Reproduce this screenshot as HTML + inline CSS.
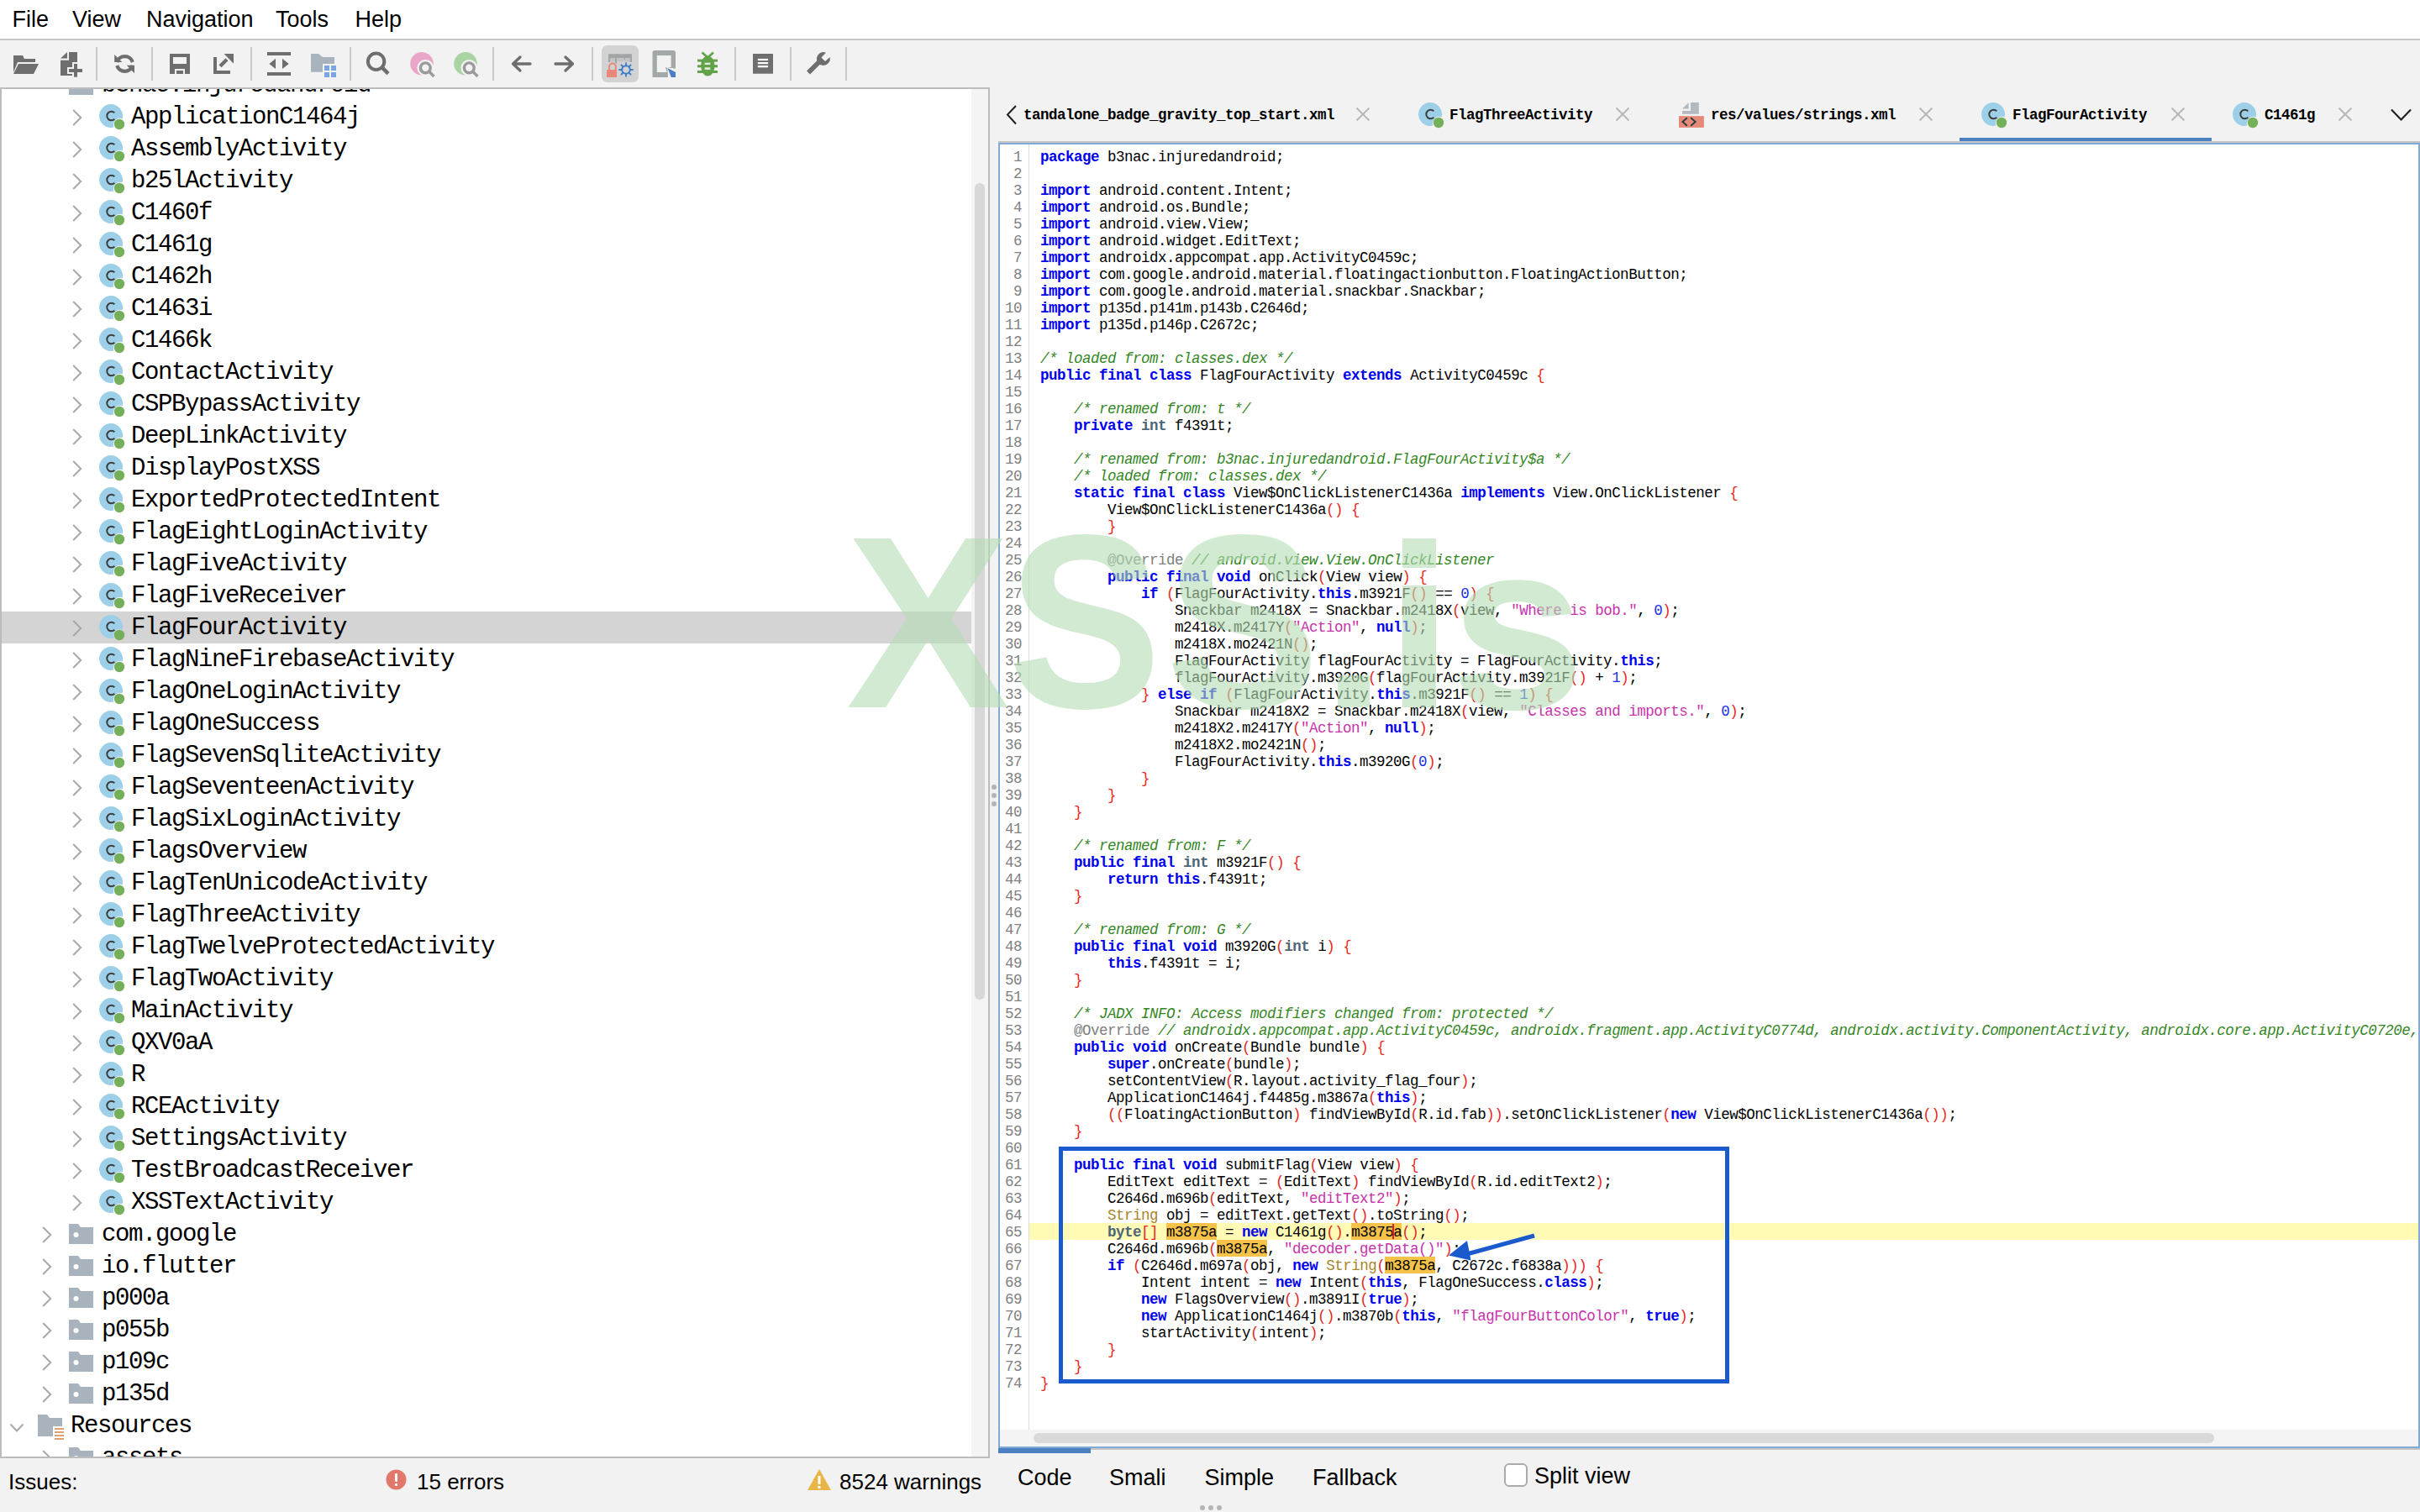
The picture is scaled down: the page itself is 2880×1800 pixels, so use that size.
<!DOCTYPE html>
<html><head><meta charset="utf-8">
<style>
*{margin:0;padding:0;box-sizing:border-box}
html,body{width:2880px;height:1800px;overflow:hidden;background:#f2f2f2;font-family:"Liberation Sans",sans-serif;color:#000}
.abs{position:absolute}
#menubar{position:absolute;left:0;top:0;width:2880px;height:46px;background:#fff;border-bottom:2px solid #c6c6c6;height:48px}
.menu{position:absolute;top:5px;font-size:27px;line-height:36px}
#toolbar{position:absolute;left:0;top:48px;width:2880px;height:56px;background:#f2f2f2}
.sep{position:absolute;top:56px;width:2px;height:40px;background:#c9c9c9}
#tree{position:absolute;left:0;top:104px;width:1178px;height:1632px;background:#fff;border:2px solid #bcbcbc;overflow:hidden}
#treein{position:absolute;left:-2px;top:-106px;width:1178px;height:1800px}
.tr{position:absolute;left:0;width:1156px;height:38px}
.sel{position:absolute;left:0;width:1156px;height:38px;background:#d4d4d4}
.tt{position:absolute;top:1px;font-family:"Liberation Mono",monospace;font-size:29px;letter-spacing:-1.4px;line-height:38px;white-space:pre}
#vscroll{position:absolute;left:1154px;top:0;width:20px;height:1628px;background:#f4f4f4}
#vthumb{position:absolute;left:4px;top:112px;width:12px;height:972px;border-radius:6px;background:#d7d7d7}
#status{position:absolute;left:0;top:1736px;width:1178px;height:64px}
.stt{position:absolute;font-size:26px;line-height:36px;top:1746px}
#tabs{position:absolute;left:1188px;top:106px;width:1692px;height:62px}
.tabt{position:absolute;font-family:"Liberation Mono",monospace;font-weight:bold;font-size:17.5px;letter-spacing:-0.5px;line-height:24px;top:125px;white-space:pre}
#tabline{position:absolute;left:1188px;top:168px;width:1692px;height:2px;background:#c4c4c4}
#editor{position:absolute;left:1188px;top:170px;width:1692px;height:1554px;border:2px solid #83a9d5;background:#fff;overflow:hidden}
#edin{position:absolute;left:-1190px;top:-172px;width:2880px;height:1800px}
.cl{position:absolute;left:1238px;height:20px;font-family:"Liberation Mono",monospace;font-size:17.5px;letter-spacing:-0.5px;line-height:20px;white-space:pre}
.ln{position:absolute;left:1170px;width:46px;text-align:right;height:20px;font-family:"Liberation Mono",monospace;font-size:17.5px;letter-spacing:-0.5px;line-height:20px;color:#808080;white-space:pre}
.kw{color:#0000f0;font-weight:bold}
.ty{color:#4e6577;font-weight:bold}
.sy{color:#a8842a}
.cm{color:#35861f;font-style:italic}
.st{color:#c832aa}
.nu{color:#1a30e8}
.br{color:#e6281e}
.an{color:#808080}
#gutline{position:absolute;left:1224px;top:172px;width:1px;height:1530px;background:#dcdcdc}
#hscroll{position:absolute;left:1190px;top:1702px;width:1688px;height:20px;background:#f4f4f4}
#hthumb{position:absolute;left:40px;top:4px;width:1405px;height:12px;border-radius:6px;background:#d9d9d9}
#bottabs{position:absolute;left:1188px;top:1724px;width:1692px;height:76px}
.btt{position:absolute;font-size:27px;line-height:36px;top:1741px}
.dot{position:absolute;width:6px;height:6px;border-radius:3px;background:#b4b4b4}
</style></head><body>
<div id="menubar">
<div class="menu" style="left:14.5px">File</div>
<div class="menu" style="left:86px">View</div>
<div class="menu" style="left:174px">Navigation</div>
<div class="menu" style="left:328px">Tools</div>
<div class="menu" style="left:422.5px">Help</div>
</div>
<div id="toolbar"></div>

<svg class="abs" style="left:0;top:0" width="1100" height="104" viewBox="0 0 1100 104">
<!-- open folder -->
<path d="M16 66 H27 L29 70 H42 V74 H21 L16 86 Z" fill="#6e6e6e"/>
<path d="M22 76 H46 L40 88 H16 Z" fill="#6e6e6e"/>
<!-- new file plus -->
<path d="M72 69.6 L80 62 V69.6 Z" fill="#6e6e6e"/>
<path d="M82 62 H92 V90 H72 V71.8 H82 Z" fill="#6e6e6e"/>
<rect x="86" y="74" width="8" height="19.7" fill="#f2f2f2"/>
<rect x="80" y="80" width="20" height="8" fill="#f2f2f2"/>
<rect x="88" y="76" width="4" height="15.7" fill="#6e6e6e"/>
<rect x="82" y="82" width="16" height="4" fill="#6e6e6e"/>
<!-- refresh -->
<path d="M139.2 74 A9.75 9.75 0 0 1 157.8 74" fill="none" stroke="#6e6e6e" stroke-width="4.2"/>
<path d="M136.2 65 L136.2 74.1 L145.3 74.1 Z" fill="#6e6e6e"/>
<path d="M157.8 78 A9.75 9.75 0 0 1 139.2 78" fill="none" stroke="#6e6e6e" stroke-width="4.2"/>
<path d="M160 77.8 L160 87.2 L150.8 77.8 Z" fill="#6e6e6e"/>
<!-- save -->
<path d="M202 64 H226 V88 H202 Z M206 68 V76 H222 V68 Z M208 82 V88 H220 V82 Z" fill="#6e6e6e" fill-rule="evenodd"/>
<rect x="210" y="84" width="8" height="4" fill="#6e6e6e"/>
<!-- export -->
<path d="M254 68 H258 V84 H274 V88 H254 Z" fill="#6e6e6e"/>
<path d="M266.6 64 H278 V75.8 Z" fill="#6e6e6e"/>
<path d="M262 78.8 L270 70.8" stroke="#6e6e6e" stroke-width="4.2"/>
<!-- align -->
<rect x="318" y="62" width="28" height="4" fill="#6e6e6e"/>
<rect x="318" y="86" width="28" height="4" fill="#6e6e6e"/>
<path d="M328 69.8 V82 L320.4 75.9 Z" fill="#6e6e6e"/>
<path d="M336 69.8 V82 L343.7 75.9 Z" fill="#6e6e6e"/>
<!-- folder grid -->
<path d="M370 64 H379 L384 68 H398 V76 H384 V85.7 H370 Z" fill="#a9b3bd"/>
<g fill="#7aa6e0"><rect x="386" y="78" width="6" height="6"/><rect x="394" y="78" width="6" height="6"/><rect x="386" y="86" width="6" height="6"/><rect x="394" y="86" width="6" height="6"/></g>
<!-- search -->
<circle cx="447.6" cy="73.3" r="9.7" fill="none" stroke="#6e6e6e" stroke-width="4"/>
<path d="M454.5 80.2 L462 87.7" stroke="#6e6e6e" stroke-width="4.5"/>
<!-- pink search -->
<circle cx="502" cy="75.8" r="13.8" fill="#eaa6c9"/>
<circle cx="506.3" cy="80.8" r="9.9" fill="#f2f2f2"/>
<circle cx="506.3" cy="80.8" r="5.9" fill="none" stroke="#9a9a9a" stroke-width="3.4"/>
<path d="M511.0 85.5 L516.5 91" stroke="#9a9a9a" stroke-width="3.4"/>
<!-- green search -->
<circle cx="554" cy="75.8" r="13.8" fill="#a9d4a2"/>
<circle cx="558.3" cy="80.8" r="9.9" fill="#f2f2f2"/>
<circle cx="558.3" cy="80.8" r="5.9" fill="none" stroke="#9a9a9a" stroke-width="3.4"/>
<path d="M563.0 85.5 L568.5 91" stroke="#9a9a9a" stroke-width="3.4"/>
<!-- back / forward -->
<path d="M631 76 H611 M619 68 L610.5 76 L619 84" fill="none" stroke="#6e6e6e" stroke-width="3.3" stroke-linecap="round" stroke-linejoin="round"/>
<path d="M661 76 H681 M673 68 L681.5 76 L673 84" fill="none" stroke="#6e6e6e" stroke-width="3.3" stroke-linecap="round" stroke-linejoin="round"/>
<!-- selected deobf button -->
<rect x="716" y="54" width="44" height="44" rx="7" fill="#d2d2d2"/>
<rect x="724" y="64.3" width="28" height="5" fill="#a2a5a5"/>
<rect x="724" y="69" width="2" height="5" fill="#a2a5a5"/><rect x="750" y="69" width="2" height="5" fill="#a2a5a5"/>
<rect x="732" y="69" width="2" height="6.5" fill="#a2a5a5"/><rect x="742.5" y="69" width="1.5" height="2.5" fill="#a2a5a5"/>
<g fill="#c2c4c4"><rect x="726" y="70" width="6" height="3.5"/><rect x="734" y="70" width="8.5" height="3.5"/><rect x="744" y="70" width="6" height="3.5"/></g>
<path d="M725 83.5 V79.5 A3.9 3.9 0 0 1 732.8 79.5 V83.5" fill="none" stroke="#e8877a" stroke-width="2"/>
<rect x="722" y="83" width="12" height="9" fill="#e8877a"/>
<circle cx="745" cy="83" r="4.8" fill="none" stroke="#3f7fc8" stroke-width="2"/>
<path d="M745 74.4 V79 M745 87 V91.6 M736.4 83 H741 M749 83 H753.6 M738.9 76.9 L742 80 M748 86 L751.1 89.1 M751.1 76.9 L748 80 M742 86 L738.9 89.1" stroke="#3f7fc8" stroke-width="1.9"/>
<!-- square pen -->
<path d="M779.5 60 H801 A3 3 0 0 1 804 63 V81.8 L794.2 80.2 L795 92 H776.5 V63 A3 3 0 0 1 779.5 60 Z M781.8 66.1 V86 H793 L793.5 86 L792 80 H798.6 V66.1 Z" fill="#a3a7a7" fill-rule="evenodd"/>
<path d="M794.2 80.2 L804 86 V92 H798.8 Z" fill="#4a80c4"/>
<path d="M793 80 L804 85" stroke="#f2f2f2" stroke-width="1"/>
<!-- bug -->
<g fill="#62a24a">
<ellipse cx="842.3" cy="78.5" rx="8.2" ry="12"/>
<path d="M835.5 62.5 L842.3 68.5 L849 62.5" fill="none" stroke="#62a24a" stroke-width="2.8"/>
<rect x="830" y="70.6" width="24" height="3"/><rect x="830" y="77.3" width="24" height="3"/><rect x="830" y="84" width="24" height="3"/>
</g>
<rect x="838.6" y="74.7" width="6.7" height="2.3" fill="#dfeedd"/><rect x="838.6" y="80.3" width="6.7" height="2.6" fill="#dfeedd"/>
<!-- list -->
<rect x="896" y="64" width="24" height="23.7" fill="#6e6e6e"/>
<rect x="901.8" y="69.9" width="12.3" height="2.2" fill="#fff"/><rect x="901.8" y="74" width="12.3" height="2.2" fill="#fff"/><rect x="901.8" y="78" width="12.3" height="2.3" fill="#fff"/>
<!-- wrench -->
<path d="M962 86.5 L977 71.5" stroke="#6e6e6e" stroke-width="5.6"/>
<path d="M983 62.6 A8 8 0 1 0 987.6 68 L982 73 L977.5 68.5 Z" fill="#6e6e6e"/>
</svg>
<div class="sep" style="left:114px"></div><div class="sep" style="left:180px"></div><div class="sep" style="left:298px"></div><div class="sep" style="left:416px"></div><div class="sep" style="left:586px"></div><div class="sep" style="left:704px"></div><div class="sep" style="left:874px"></div><div class="sep" style="left:940px"></div><div class="sep" style="left:1006px"></div>
<div id="tree"><div id="treein">
<div class="tr" style="top:82px"><span style="position:absolute;left:82px;top:7px"><svg width="30" height="24" viewBox="0 0 30 24"><path d="M0 0 H11 L14 4 H29 V24 H0 Z" fill="#a9b3bd"/></svg></span><span class="tt" style="left:121px">b3nac.injuredandroid</span></div>
<div class="tr" style="top:120px"><span style="position:absolute;left:86px;top:10px"><svg class="chev" width="12" height="20" viewBox="0 0 12 20"><path d="M1.2 1 L10.2 10 L1.2 19" fill="none" stroke="#a8a8a8" stroke-width="2"/></svg></span><span style="position:absolute;left:118px;top:4px"><svg width="32" height="32" viewBox="0 0 32 32"><path d="M14 0 A14 14 0 1 0 17.4 27.6 A8 8 0 0 1 27.6 17.4 A14 14 0 0 0 14 0 Z" fill="#9dcfe8"/><path d="M18.3 10.2 A5.3 5.3 0 1 0 18.3 17.8" fill="none" stroke="#3c3c3c" stroke-width="2"/><circle cx="24" cy="24" r="6.2" fill="#74b05a"/></svg></span><span class="tt" style="left:156px">ApplicationC1464j</span></div>
<div class="tr" style="top:158px"><span style="position:absolute;left:86px;top:10px"><svg class="chev" width="12" height="20" viewBox="0 0 12 20"><path d="M1.2 1 L10.2 10 L1.2 19" fill="none" stroke="#a8a8a8" stroke-width="2"/></svg></span><span style="position:absolute;left:118px;top:4px"><svg width="32" height="32" viewBox="0 0 32 32"><path d="M14 0 A14 14 0 1 0 17.4 27.6 A8 8 0 0 1 27.6 17.4 A14 14 0 0 0 14 0 Z" fill="#9dcfe8"/><path d="M18.3 10.2 A5.3 5.3 0 1 0 18.3 17.8" fill="none" stroke="#3c3c3c" stroke-width="2"/><circle cx="24" cy="24" r="6.2" fill="#74b05a"/></svg></span><span class="tt" style="left:156px">AssemblyActivity</span></div>
<div class="tr" style="top:196px"><span style="position:absolute;left:86px;top:10px"><svg class="chev" width="12" height="20" viewBox="0 0 12 20"><path d="M1.2 1 L10.2 10 L1.2 19" fill="none" stroke="#a8a8a8" stroke-width="2"/></svg></span><span style="position:absolute;left:118px;top:4px"><svg width="32" height="32" viewBox="0 0 32 32"><path d="M14 0 A14 14 0 1 0 17.4 27.6 A8 8 0 0 1 27.6 17.4 A14 14 0 0 0 14 0 Z" fill="#9dcfe8"/><path d="M18.3 10.2 A5.3 5.3 0 1 0 18.3 17.8" fill="none" stroke="#3c3c3c" stroke-width="2"/><circle cx="24" cy="24" r="6.2" fill="#74b05a"/></svg></span><span class="tt" style="left:156px">b25lActivity</span></div>
<div class="tr" style="top:234px"><span style="position:absolute;left:86px;top:10px"><svg class="chev" width="12" height="20" viewBox="0 0 12 20"><path d="M1.2 1 L10.2 10 L1.2 19" fill="none" stroke="#a8a8a8" stroke-width="2"/></svg></span><span style="position:absolute;left:118px;top:4px"><svg width="32" height="32" viewBox="0 0 32 32"><path d="M14 0 A14 14 0 1 0 17.4 27.6 A8 8 0 0 1 27.6 17.4 A14 14 0 0 0 14 0 Z" fill="#9dcfe8"/><path d="M18.3 10.2 A5.3 5.3 0 1 0 18.3 17.8" fill="none" stroke="#3c3c3c" stroke-width="2"/><circle cx="24" cy="24" r="6.2" fill="#74b05a"/></svg></span><span class="tt" style="left:156px">C1460f</span></div>
<div class="tr" style="top:272px"><span style="position:absolute;left:86px;top:10px"><svg class="chev" width="12" height="20" viewBox="0 0 12 20"><path d="M1.2 1 L10.2 10 L1.2 19" fill="none" stroke="#a8a8a8" stroke-width="2"/></svg></span><span style="position:absolute;left:118px;top:4px"><svg width="32" height="32" viewBox="0 0 32 32"><path d="M14 0 A14 14 0 1 0 17.4 27.6 A8 8 0 0 1 27.6 17.4 A14 14 0 0 0 14 0 Z" fill="#9dcfe8"/><path d="M18.3 10.2 A5.3 5.3 0 1 0 18.3 17.8" fill="none" stroke="#3c3c3c" stroke-width="2"/><circle cx="24" cy="24" r="6.2" fill="#74b05a"/></svg></span><span class="tt" style="left:156px">C1461g</span></div>
<div class="tr" style="top:310px"><span style="position:absolute;left:86px;top:10px"><svg class="chev" width="12" height="20" viewBox="0 0 12 20"><path d="M1.2 1 L10.2 10 L1.2 19" fill="none" stroke="#a8a8a8" stroke-width="2"/></svg></span><span style="position:absolute;left:118px;top:4px"><svg width="32" height="32" viewBox="0 0 32 32"><path d="M14 0 A14 14 0 1 0 17.4 27.6 A8 8 0 0 1 27.6 17.4 A14 14 0 0 0 14 0 Z" fill="#9dcfe8"/><path d="M18.3 10.2 A5.3 5.3 0 1 0 18.3 17.8" fill="none" stroke="#3c3c3c" stroke-width="2"/><circle cx="24" cy="24" r="6.2" fill="#74b05a"/></svg></span><span class="tt" style="left:156px">C1462h</span></div>
<div class="tr" style="top:348px"><span style="position:absolute;left:86px;top:10px"><svg class="chev" width="12" height="20" viewBox="0 0 12 20"><path d="M1.2 1 L10.2 10 L1.2 19" fill="none" stroke="#a8a8a8" stroke-width="2"/></svg></span><span style="position:absolute;left:118px;top:4px"><svg width="32" height="32" viewBox="0 0 32 32"><path d="M14 0 A14 14 0 1 0 17.4 27.6 A8 8 0 0 1 27.6 17.4 A14 14 0 0 0 14 0 Z" fill="#9dcfe8"/><path d="M18.3 10.2 A5.3 5.3 0 1 0 18.3 17.8" fill="none" stroke="#3c3c3c" stroke-width="2"/><circle cx="24" cy="24" r="6.2" fill="#74b05a"/></svg></span><span class="tt" style="left:156px">C1463i</span></div>
<div class="tr" style="top:386px"><span style="position:absolute;left:86px;top:10px"><svg class="chev" width="12" height="20" viewBox="0 0 12 20"><path d="M1.2 1 L10.2 10 L1.2 19" fill="none" stroke="#a8a8a8" stroke-width="2"/></svg></span><span style="position:absolute;left:118px;top:4px"><svg width="32" height="32" viewBox="0 0 32 32"><path d="M14 0 A14 14 0 1 0 17.4 27.6 A8 8 0 0 1 27.6 17.4 A14 14 0 0 0 14 0 Z" fill="#9dcfe8"/><path d="M18.3 10.2 A5.3 5.3 0 1 0 18.3 17.8" fill="none" stroke="#3c3c3c" stroke-width="2"/><circle cx="24" cy="24" r="6.2" fill="#74b05a"/></svg></span><span class="tt" style="left:156px">C1466k</span></div>
<div class="tr" style="top:424px"><span style="position:absolute;left:86px;top:10px"><svg class="chev" width="12" height="20" viewBox="0 0 12 20"><path d="M1.2 1 L10.2 10 L1.2 19" fill="none" stroke="#a8a8a8" stroke-width="2"/></svg></span><span style="position:absolute;left:118px;top:4px"><svg width="32" height="32" viewBox="0 0 32 32"><path d="M14 0 A14 14 0 1 0 17.4 27.6 A8 8 0 0 1 27.6 17.4 A14 14 0 0 0 14 0 Z" fill="#9dcfe8"/><path d="M18.3 10.2 A5.3 5.3 0 1 0 18.3 17.8" fill="none" stroke="#3c3c3c" stroke-width="2"/><circle cx="24" cy="24" r="6.2" fill="#74b05a"/></svg></span><span class="tt" style="left:156px">ContactActivity</span></div>
<div class="tr" style="top:462px"><span style="position:absolute;left:86px;top:10px"><svg class="chev" width="12" height="20" viewBox="0 0 12 20"><path d="M1.2 1 L10.2 10 L1.2 19" fill="none" stroke="#a8a8a8" stroke-width="2"/></svg></span><span style="position:absolute;left:118px;top:4px"><svg width="32" height="32" viewBox="0 0 32 32"><path d="M14 0 A14 14 0 1 0 17.4 27.6 A8 8 0 0 1 27.6 17.4 A14 14 0 0 0 14 0 Z" fill="#9dcfe8"/><path d="M18.3 10.2 A5.3 5.3 0 1 0 18.3 17.8" fill="none" stroke="#3c3c3c" stroke-width="2"/><circle cx="24" cy="24" r="6.2" fill="#74b05a"/></svg></span><span class="tt" style="left:156px">CSPBypassActivity</span></div>
<div class="tr" style="top:500px"><span style="position:absolute;left:86px;top:10px"><svg class="chev" width="12" height="20" viewBox="0 0 12 20"><path d="M1.2 1 L10.2 10 L1.2 19" fill="none" stroke="#a8a8a8" stroke-width="2"/></svg></span><span style="position:absolute;left:118px;top:4px"><svg width="32" height="32" viewBox="0 0 32 32"><path d="M14 0 A14 14 0 1 0 17.4 27.6 A8 8 0 0 1 27.6 17.4 A14 14 0 0 0 14 0 Z" fill="#9dcfe8"/><path d="M18.3 10.2 A5.3 5.3 0 1 0 18.3 17.8" fill="none" stroke="#3c3c3c" stroke-width="2"/><circle cx="24" cy="24" r="6.2" fill="#74b05a"/></svg></span><span class="tt" style="left:156px">DeepLinkActivity</span></div>
<div class="tr" style="top:538px"><span style="position:absolute;left:86px;top:10px"><svg class="chev" width="12" height="20" viewBox="0 0 12 20"><path d="M1.2 1 L10.2 10 L1.2 19" fill="none" stroke="#a8a8a8" stroke-width="2"/></svg></span><span style="position:absolute;left:118px;top:4px"><svg width="32" height="32" viewBox="0 0 32 32"><path d="M14 0 A14 14 0 1 0 17.4 27.6 A8 8 0 0 1 27.6 17.4 A14 14 0 0 0 14 0 Z" fill="#9dcfe8"/><path d="M18.3 10.2 A5.3 5.3 0 1 0 18.3 17.8" fill="none" stroke="#3c3c3c" stroke-width="2"/><circle cx="24" cy="24" r="6.2" fill="#74b05a"/></svg></span><span class="tt" style="left:156px">DisplayPostXSS</span></div>
<div class="tr" style="top:576px"><span style="position:absolute;left:86px;top:10px"><svg class="chev" width="12" height="20" viewBox="0 0 12 20"><path d="M1.2 1 L10.2 10 L1.2 19" fill="none" stroke="#a8a8a8" stroke-width="2"/></svg></span><span style="position:absolute;left:118px;top:4px"><svg width="32" height="32" viewBox="0 0 32 32"><path d="M14 0 A14 14 0 1 0 17.4 27.6 A8 8 0 0 1 27.6 17.4 A14 14 0 0 0 14 0 Z" fill="#9dcfe8"/><path d="M18.3 10.2 A5.3 5.3 0 1 0 18.3 17.8" fill="none" stroke="#3c3c3c" stroke-width="2"/><circle cx="24" cy="24" r="6.2" fill="#74b05a"/></svg></span><span class="tt" style="left:156px">ExportedProtectedIntent</span></div>
<div class="tr" style="top:614px"><span style="position:absolute;left:86px;top:10px"><svg class="chev" width="12" height="20" viewBox="0 0 12 20"><path d="M1.2 1 L10.2 10 L1.2 19" fill="none" stroke="#a8a8a8" stroke-width="2"/></svg></span><span style="position:absolute;left:118px;top:4px"><svg width="32" height="32" viewBox="0 0 32 32"><path d="M14 0 A14 14 0 1 0 17.4 27.6 A8 8 0 0 1 27.6 17.4 A14 14 0 0 0 14 0 Z" fill="#9dcfe8"/><path d="M18.3 10.2 A5.3 5.3 0 1 0 18.3 17.8" fill="none" stroke="#3c3c3c" stroke-width="2"/><circle cx="24" cy="24" r="6.2" fill="#74b05a"/></svg></span><span class="tt" style="left:156px">FlagEightLoginActivity</span></div>
<div class="tr" style="top:652px"><span style="position:absolute;left:86px;top:10px"><svg class="chev" width="12" height="20" viewBox="0 0 12 20"><path d="M1.2 1 L10.2 10 L1.2 19" fill="none" stroke="#a8a8a8" stroke-width="2"/></svg></span><span style="position:absolute;left:118px;top:4px"><svg width="32" height="32" viewBox="0 0 32 32"><path d="M14 0 A14 14 0 1 0 17.4 27.6 A8 8 0 0 1 27.6 17.4 A14 14 0 0 0 14 0 Z" fill="#9dcfe8"/><path d="M18.3 10.2 A5.3 5.3 0 1 0 18.3 17.8" fill="none" stroke="#3c3c3c" stroke-width="2"/><circle cx="24" cy="24" r="6.2" fill="#74b05a"/></svg></span><span class="tt" style="left:156px">FlagFiveActivity</span></div>
<div class="tr" style="top:690px"><span style="position:absolute;left:86px;top:10px"><svg class="chev" width="12" height="20" viewBox="0 0 12 20"><path d="M1.2 1 L10.2 10 L1.2 19" fill="none" stroke="#a8a8a8" stroke-width="2"/></svg></span><span style="position:absolute;left:118px;top:4px"><svg width="32" height="32" viewBox="0 0 32 32"><path d="M14 0 A14 14 0 1 0 17.4 27.6 A8 8 0 0 1 27.6 17.4 A14 14 0 0 0 14 0 Z" fill="#9dcfe8"/><path d="M18.3 10.2 A5.3 5.3 0 1 0 18.3 17.8" fill="none" stroke="#3c3c3c" stroke-width="2"/><circle cx="24" cy="24" r="6.2" fill="#74b05a"/></svg></span><span class="tt" style="left:156px">FlagFiveReceiver</span></div>
<div class="sel" style="top:728px"></div><div class="tr" style="top:728px"><span style="position:absolute;left:86px;top:10px"><svg class="chev" width="12" height="20" viewBox="0 0 12 20"><path d="M1.2 1 L10.2 10 L1.2 19" fill="none" stroke="#a8a8a8" stroke-width="2"/></svg></span><span style="position:absolute;left:118px;top:4px"><svg width="32" height="32" viewBox="0 0 32 32"><path d="M14 0 A14 14 0 1 0 17.4 27.6 A8 8 0 0 1 27.6 17.4 A14 14 0 0 0 14 0 Z" fill="#9dcfe8"/><path d="M18.3 10.2 A5.3 5.3 0 1 0 18.3 17.8" fill="none" stroke="#3c3c3c" stroke-width="2"/><circle cx="24" cy="24" r="6.2" fill="#74b05a"/></svg></span><span class="tt" style="left:156px">FlagFourActivity</span></div>
<div class="tr" style="top:766px"><span style="position:absolute;left:86px;top:10px"><svg class="chev" width="12" height="20" viewBox="0 0 12 20"><path d="M1.2 1 L10.2 10 L1.2 19" fill="none" stroke="#a8a8a8" stroke-width="2"/></svg></span><span style="position:absolute;left:118px;top:4px"><svg width="32" height="32" viewBox="0 0 32 32"><path d="M14 0 A14 14 0 1 0 17.4 27.6 A8 8 0 0 1 27.6 17.4 A14 14 0 0 0 14 0 Z" fill="#9dcfe8"/><path d="M18.3 10.2 A5.3 5.3 0 1 0 18.3 17.8" fill="none" stroke="#3c3c3c" stroke-width="2"/><circle cx="24" cy="24" r="6.2" fill="#74b05a"/></svg></span><span class="tt" style="left:156px">FlagNineFirebaseActivity</span></div>
<div class="tr" style="top:804px"><span style="position:absolute;left:86px;top:10px"><svg class="chev" width="12" height="20" viewBox="0 0 12 20"><path d="M1.2 1 L10.2 10 L1.2 19" fill="none" stroke="#a8a8a8" stroke-width="2"/></svg></span><span style="position:absolute;left:118px;top:4px"><svg width="32" height="32" viewBox="0 0 32 32"><path d="M14 0 A14 14 0 1 0 17.4 27.6 A8 8 0 0 1 27.6 17.4 A14 14 0 0 0 14 0 Z" fill="#9dcfe8"/><path d="M18.3 10.2 A5.3 5.3 0 1 0 18.3 17.8" fill="none" stroke="#3c3c3c" stroke-width="2"/><circle cx="24" cy="24" r="6.2" fill="#74b05a"/></svg></span><span class="tt" style="left:156px">FlagOneLoginActivity</span></div>
<div class="tr" style="top:842px"><span style="position:absolute;left:86px;top:10px"><svg class="chev" width="12" height="20" viewBox="0 0 12 20"><path d="M1.2 1 L10.2 10 L1.2 19" fill="none" stroke="#a8a8a8" stroke-width="2"/></svg></span><span style="position:absolute;left:118px;top:4px"><svg width="32" height="32" viewBox="0 0 32 32"><path d="M14 0 A14 14 0 1 0 17.4 27.6 A8 8 0 0 1 27.6 17.4 A14 14 0 0 0 14 0 Z" fill="#9dcfe8"/><path d="M18.3 10.2 A5.3 5.3 0 1 0 18.3 17.8" fill="none" stroke="#3c3c3c" stroke-width="2"/><circle cx="24" cy="24" r="6.2" fill="#74b05a"/></svg></span><span class="tt" style="left:156px">FlagOneSuccess</span></div>
<div class="tr" style="top:880px"><span style="position:absolute;left:86px;top:10px"><svg class="chev" width="12" height="20" viewBox="0 0 12 20"><path d="M1.2 1 L10.2 10 L1.2 19" fill="none" stroke="#a8a8a8" stroke-width="2"/></svg></span><span style="position:absolute;left:118px;top:4px"><svg width="32" height="32" viewBox="0 0 32 32"><path d="M14 0 A14 14 0 1 0 17.4 27.6 A8 8 0 0 1 27.6 17.4 A14 14 0 0 0 14 0 Z" fill="#9dcfe8"/><path d="M18.3 10.2 A5.3 5.3 0 1 0 18.3 17.8" fill="none" stroke="#3c3c3c" stroke-width="2"/><circle cx="24" cy="24" r="6.2" fill="#74b05a"/></svg></span><span class="tt" style="left:156px">FlagSevenSqliteActivity</span></div>
<div class="tr" style="top:918px"><span style="position:absolute;left:86px;top:10px"><svg class="chev" width="12" height="20" viewBox="0 0 12 20"><path d="M1.2 1 L10.2 10 L1.2 19" fill="none" stroke="#a8a8a8" stroke-width="2"/></svg></span><span style="position:absolute;left:118px;top:4px"><svg width="32" height="32" viewBox="0 0 32 32"><path d="M14 0 A14 14 0 1 0 17.4 27.6 A8 8 0 0 1 27.6 17.4 A14 14 0 0 0 14 0 Z" fill="#9dcfe8"/><path d="M18.3 10.2 A5.3 5.3 0 1 0 18.3 17.8" fill="none" stroke="#3c3c3c" stroke-width="2"/><circle cx="24" cy="24" r="6.2" fill="#74b05a"/></svg></span><span class="tt" style="left:156px">FlagSeventeenActivity</span></div>
<div class="tr" style="top:956px"><span style="position:absolute;left:86px;top:10px"><svg class="chev" width="12" height="20" viewBox="0 0 12 20"><path d="M1.2 1 L10.2 10 L1.2 19" fill="none" stroke="#a8a8a8" stroke-width="2"/></svg></span><span style="position:absolute;left:118px;top:4px"><svg width="32" height="32" viewBox="0 0 32 32"><path d="M14 0 A14 14 0 1 0 17.4 27.6 A8 8 0 0 1 27.6 17.4 A14 14 0 0 0 14 0 Z" fill="#9dcfe8"/><path d="M18.3 10.2 A5.3 5.3 0 1 0 18.3 17.8" fill="none" stroke="#3c3c3c" stroke-width="2"/><circle cx="24" cy="24" r="6.2" fill="#74b05a"/></svg></span><span class="tt" style="left:156px">FlagSixLoginActivity</span></div>
<div class="tr" style="top:994px"><span style="position:absolute;left:86px;top:10px"><svg class="chev" width="12" height="20" viewBox="0 0 12 20"><path d="M1.2 1 L10.2 10 L1.2 19" fill="none" stroke="#a8a8a8" stroke-width="2"/></svg></span><span style="position:absolute;left:118px;top:4px"><svg width="32" height="32" viewBox="0 0 32 32"><path d="M14 0 A14 14 0 1 0 17.4 27.6 A8 8 0 0 1 27.6 17.4 A14 14 0 0 0 14 0 Z" fill="#9dcfe8"/><path d="M18.3 10.2 A5.3 5.3 0 1 0 18.3 17.8" fill="none" stroke="#3c3c3c" stroke-width="2"/><circle cx="24" cy="24" r="6.2" fill="#74b05a"/></svg></span><span class="tt" style="left:156px">FlagsOverview</span></div>
<div class="tr" style="top:1032px"><span style="position:absolute;left:86px;top:10px"><svg class="chev" width="12" height="20" viewBox="0 0 12 20"><path d="M1.2 1 L10.2 10 L1.2 19" fill="none" stroke="#a8a8a8" stroke-width="2"/></svg></span><span style="position:absolute;left:118px;top:4px"><svg width="32" height="32" viewBox="0 0 32 32"><path d="M14 0 A14 14 0 1 0 17.4 27.6 A8 8 0 0 1 27.6 17.4 A14 14 0 0 0 14 0 Z" fill="#9dcfe8"/><path d="M18.3 10.2 A5.3 5.3 0 1 0 18.3 17.8" fill="none" stroke="#3c3c3c" stroke-width="2"/><circle cx="24" cy="24" r="6.2" fill="#74b05a"/></svg></span><span class="tt" style="left:156px">FlagTenUnicodeActivity</span></div>
<div class="tr" style="top:1070px"><span style="position:absolute;left:86px;top:10px"><svg class="chev" width="12" height="20" viewBox="0 0 12 20"><path d="M1.2 1 L10.2 10 L1.2 19" fill="none" stroke="#a8a8a8" stroke-width="2"/></svg></span><span style="position:absolute;left:118px;top:4px"><svg width="32" height="32" viewBox="0 0 32 32"><path d="M14 0 A14 14 0 1 0 17.4 27.6 A8 8 0 0 1 27.6 17.4 A14 14 0 0 0 14 0 Z" fill="#9dcfe8"/><path d="M18.3 10.2 A5.3 5.3 0 1 0 18.3 17.8" fill="none" stroke="#3c3c3c" stroke-width="2"/><circle cx="24" cy="24" r="6.2" fill="#74b05a"/></svg></span><span class="tt" style="left:156px">FlagThreeActivity</span></div>
<div class="tr" style="top:1108px"><span style="position:absolute;left:86px;top:10px"><svg class="chev" width="12" height="20" viewBox="0 0 12 20"><path d="M1.2 1 L10.2 10 L1.2 19" fill="none" stroke="#a8a8a8" stroke-width="2"/></svg></span><span style="position:absolute;left:118px;top:4px"><svg width="32" height="32" viewBox="0 0 32 32"><path d="M14 0 A14 14 0 1 0 17.4 27.6 A8 8 0 0 1 27.6 17.4 A14 14 0 0 0 14 0 Z" fill="#9dcfe8"/><path d="M18.3 10.2 A5.3 5.3 0 1 0 18.3 17.8" fill="none" stroke="#3c3c3c" stroke-width="2"/><circle cx="24" cy="24" r="6.2" fill="#74b05a"/></svg></span><span class="tt" style="left:156px">FlagTwelveProtectedActivity</span></div>
<div class="tr" style="top:1146px"><span style="position:absolute;left:86px;top:10px"><svg class="chev" width="12" height="20" viewBox="0 0 12 20"><path d="M1.2 1 L10.2 10 L1.2 19" fill="none" stroke="#a8a8a8" stroke-width="2"/></svg></span><span style="position:absolute;left:118px;top:4px"><svg width="32" height="32" viewBox="0 0 32 32"><path d="M14 0 A14 14 0 1 0 17.4 27.6 A8 8 0 0 1 27.6 17.4 A14 14 0 0 0 14 0 Z" fill="#9dcfe8"/><path d="M18.3 10.2 A5.3 5.3 0 1 0 18.3 17.8" fill="none" stroke="#3c3c3c" stroke-width="2"/><circle cx="24" cy="24" r="6.2" fill="#74b05a"/></svg></span><span class="tt" style="left:156px">FlagTwoActivity</span></div>
<div class="tr" style="top:1184px"><span style="position:absolute;left:86px;top:10px"><svg class="chev" width="12" height="20" viewBox="0 0 12 20"><path d="M1.2 1 L10.2 10 L1.2 19" fill="none" stroke="#a8a8a8" stroke-width="2"/></svg></span><span style="position:absolute;left:118px;top:4px"><svg width="32" height="32" viewBox="0 0 32 32"><path d="M14 0 A14 14 0 1 0 17.4 27.6 A8 8 0 0 1 27.6 17.4 A14 14 0 0 0 14 0 Z" fill="#9dcfe8"/><path d="M18.3 10.2 A5.3 5.3 0 1 0 18.3 17.8" fill="none" stroke="#3c3c3c" stroke-width="2"/><circle cx="24" cy="24" r="6.2" fill="#74b05a"/></svg></span><span class="tt" style="left:156px">MainActivity</span></div>
<div class="tr" style="top:1222px"><span style="position:absolute;left:86px;top:10px"><svg class="chev" width="12" height="20" viewBox="0 0 12 20"><path d="M1.2 1 L10.2 10 L1.2 19" fill="none" stroke="#a8a8a8" stroke-width="2"/></svg></span><span style="position:absolute;left:118px;top:4px"><svg width="32" height="32" viewBox="0 0 32 32"><path d="M14 0 A14 14 0 1 0 17.4 27.6 A8 8 0 0 1 27.6 17.4 A14 14 0 0 0 14 0 Z" fill="#9dcfe8"/><path d="M18.3 10.2 A5.3 5.3 0 1 0 18.3 17.8" fill="none" stroke="#3c3c3c" stroke-width="2"/><circle cx="24" cy="24" r="6.2" fill="#74b05a"/></svg></span><span class="tt" style="left:156px">QXV0aA</span></div>
<div class="tr" style="top:1260px"><span style="position:absolute;left:86px;top:10px"><svg class="chev" width="12" height="20" viewBox="0 0 12 20"><path d="M1.2 1 L10.2 10 L1.2 19" fill="none" stroke="#a8a8a8" stroke-width="2"/></svg></span><span style="position:absolute;left:118px;top:4px"><svg width="32" height="32" viewBox="0 0 32 32"><path d="M14 0 A14 14 0 1 0 17.4 27.6 A8 8 0 0 1 27.6 17.4 A14 14 0 0 0 14 0 Z" fill="#9dcfe8"/><path d="M18.3 10.2 A5.3 5.3 0 1 0 18.3 17.8" fill="none" stroke="#3c3c3c" stroke-width="2"/><circle cx="24" cy="24" r="6.2" fill="#74b05a"/></svg></span><span class="tt" style="left:156px">R</span></div>
<div class="tr" style="top:1298px"><span style="position:absolute;left:86px;top:10px"><svg class="chev" width="12" height="20" viewBox="0 0 12 20"><path d="M1.2 1 L10.2 10 L1.2 19" fill="none" stroke="#a8a8a8" stroke-width="2"/></svg></span><span style="position:absolute;left:118px;top:4px"><svg width="32" height="32" viewBox="0 0 32 32"><path d="M14 0 A14 14 0 1 0 17.4 27.6 A8 8 0 0 1 27.6 17.4 A14 14 0 0 0 14 0 Z" fill="#9dcfe8"/><path d="M18.3 10.2 A5.3 5.3 0 1 0 18.3 17.8" fill="none" stroke="#3c3c3c" stroke-width="2"/><circle cx="24" cy="24" r="6.2" fill="#74b05a"/></svg></span><span class="tt" style="left:156px">RCEActivity</span></div>
<div class="tr" style="top:1336px"><span style="position:absolute;left:86px;top:10px"><svg class="chev" width="12" height="20" viewBox="0 0 12 20"><path d="M1.2 1 L10.2 10 L1.2 19" fill="none" stroke="#a8a8a8" stroke-width="2"/></svg></span><span style="position:absolute;left:118px;top:4px"><svg width="32" height="32" viewBox="0 0 32 32"><path d="M14 0 A14 14 0 1 0 17.4 27.6 A8 8 0 0 1 27.6 17.4 A14 14 0 0 0 14 0 Z" fill="#9dcfe8"/><path d="M18.3 10.2 A5.3 5.3 0 1 0 18.3 17.8" fill="none" stroke="#3c3c3c" stroke-width="2"/><circle cx="24" cy="24" r="6.2" fill="#74b05a"/></svg></span><span class="tt" style="left:156px">SettingsActivity</span></div>
<div class="tr" style="top:1374px"><span style="position:absolute;left:86px;top:10px"><svg class="chev" width="12" height="20" viewBox="0 0 12 20"><path d="M1.2 1 L10.2 10 L1.2 19" fill="none" stroke="#a8a8a8" stroke-width="2"/></svg></span><span style="position:absolute;left:118px;top:4px"><svg width="32" height="32" viewBox="0 0 32 32"><path d="M14 0 A14 14 0 1 0 17.4 27.6 A8 8 0 0 1 27.6 17.4 A14 14 0 0 0 14 0 Z" fill="#9dcfe8"/><path d="M18.3 10.2 A5.3 5.3 0 1 0 18.3 17.8" fill="none" stroke="#3c3c3c" stroke-width="2"/><circle cx="24" cy="24" r="6.2" fill="#74b05a"/></svg></span><span class="tt" style="left:156px">TestBroadcastReceiver</span></div>
<div class="tr" style="top:1412px"><span style="position:absolute;left:86px;top:10px"><svg class="chev" width="12" height="20" viewBox="0 0 12 20"><path d="M1.2 1 L10.2 10 L1.2 19" fill="none" stroke="#a8a8a8" stroke-width="2"/></svg></span><span style="position:absolute;left:118px;top:4px"><svg width="32" height="32" viewBox="0 0 32 32"><path d="M14 0 A14 14 0 1 0 17.4 27.6 A8 8 0 0 1 27.6 17.4 A14 14 0 0 0 14 0 Z" fill="#9dcfe8"/><path d="M18.3 10.2 A5.3 5.3 0 1 0 18.3 17.8" fill="none" stroke="#3c3c3c" stroke-width="2"/><circle cx="24" cy="24" r="6.2" fill="#74b05a"/></svg></span><span class="tt" style="left:156px">XSSTextActivity</span></div>
<div class="tr" style="top:1450px"><span style="position:absolute;left:50px;top:10px"><svg class="chev" width="12" height="20" viewBox="0 0 12 20"><path d="M1.2 1 L10.2 10 L1.2 19" fill="none" stroke="#a8a8a8" stroke-width="2"/></svg></span><span style="position:absolute;left:82px;top:7px"><svg class="fic" width="30" height="24" viewBox="0 0 30 24"><path d="M0 0 H11 L14 4 H29 V24 H0 Z" fill="#a9b3bd"/><circle cx="8.5" cy="13" r="3" fill="#ffffff"/></svg></span><span class="tt" style="left:121px">com.google</span></div>
<div class="tr" style="top:1488px"><span style="position:absolute;left:50px;top:10px"><svg class="chev" width="12" height="20" viewBox="0 0 12 20"><path d="M1.2 1 L10.2 10 L1.2 19" fill="none" stroke="#a8a8a8" stroke-width="2"/></svg></span><span style="position:absolute;left:82px;top:7px"><svg class="fic" width="30" height="24" viewBox="0 0 30 24"><path d="M0 0 H11 L14 4 H29 V24 H0 Z" fill="#a9b3bd"/><circle cx="8.5" cy="13" r="3" fill="#ffffff"/></svg></span><span class="tt" style="left:121px">io.flutter</span></div>
<div class="tr" style="top:1526px"><span style="position:absolute;left:50px;top:10px"><svg class="chev" width="12" height="20" viewBox="0 0 12 20"><path d="M1.2 1 L10.2 10 L1.2 19" fill="none" stroke="#a8a8a8" stroke-width="2"/></svg></span><span style="position:absolute;left:82px;top:7px"><svg class="fic" width="30" height="24" viewBox="0 0 30 24"><path d="M0 0 H11 L14 4 H29 V24 H0 Z" fill="#a9b3bd"/><circle cx="8.5" cy="13" r="3" fill="#ffffff"/></svg></span><span class="tt" style="left:121px">p000a</span></div>
<div class="tr" style="top:1564px"><span style="position:absolute;left:50px;top:10px"><svg class="chev" width="12" height="20" viewBox="0 0 12 20"><path d="M1.2 1 L10.2 10 L1.2 19" fill="none" stroke="#a8a8a8" stroke-width="2"/></svg></span><span style="position:absolute;left:82px;top:7px"><svg class="fic" width="30" height="24" viewBox="0 0 30 24"><path d="M0 0 H11 L14 4 H29 V24 H0 Z" fill="#a9b3bd"/><circle cx="8.5" cy="13" r="3" fill="#ffffff"/></svg></span><span class="tt" style="left:121px">p055b</span></div>
<div class="tr" style="top:1602px"><span style="position:absolute;left:50px;top:10px"><svg class="chev" width="12" height="20" viewBox="0 0 12 20"><path d="M1.2 1 L10.2 10 L1.2 19" fill="none" stroke="#a8a8a8" stroke-width="2"/></svg></span><span style="position:absolute;left:82px;top:7px"><svg class="fic" width="30" height="24" viewBox="0 0 30 24"><path d="M0 0 H11 L14 4 H29 V24 H0 Z" fill="#a9b3bd"/><circle cx="8.5" cy="13" r="3" fill="#ffffff"/></svg></span><span class="tt" style="left:121px">p109c</span></div>
<div class="tr" style="top:1640px"><span style="position:absolute;left:50px;top:10px"><svg class="chev" width="12" height="20" viewBox="0 0 12 20"><path d="M1.2 1 L10.2 10 L1.2 19" fill="none" stroke="#a8a8a8" stroke-width="2"/></svg></span><span style="position:absolute;left:82px;top:7px"><svg class="fic" width="30" height="24" viewBox="0 0 30 24"><path d="M0 0 H11 L14 4 H29 V24 H0 Z" fill="#a9b3bd"/><circle cx="8.5" cy="13" r="3" fill="#ffffff"/></svg></span><span class="tt" style="left:121px">p135d</span></div>
<div class="tr" style="top:1678px"><span style="position:absolute;left:11px;top:14px"><svg class="chev" width="18" height="12" viewBox="0 0 18 12"><path d="M1.5 1.5 L9 9.5 L16.5 1.5" fill="none" stroke="#a8a8a8" stroke-width="2"/></svg></span><span style="position:absolute;left:45px;top:6px"><svg width="34" height="30" viewBox="0 0 34 30"><path d="M0 0 H11 L14 4 H29 V26 H0 Z" fill="#a9b3bd"/><rect x="18" y="14" width="14" height="16" fill="#ffffff"/><g fill="#e0a070"><rect x="20" y="16" width="11" height="2"/><rect x="20" y="20" width="11" height="2"/><rect x="20" y="24" width="11" height="2"/><rect x="20" y="28" width="11" height="2"/></g></svg></span><span class="tt" style="left:84px">Resources</span></div>
<div class="tr" style="top:1716px"><span style="position:absolute;left:50px;top:10px"><svg class="chev" width="12" height="20" viewBox="0 0 12 20"><path d="M1.2 1 L10.2 10 L1.2 19" fill="none" stroke="#a8a8a8" stroke-width="2"/></svg></span><span style="position:absolute;left:82px;top:7px"><svg class="fic" width="30" height="24" viewBox="0 0 30 24"><path d="M0 0 H11 L14 4 H29 V24 H0 Z" fill="#a9b3bd"/><circle cx="8.5" cy="13" r="3" fill="#ffffff"/></svg></span><span class="tt" style="left:121px">assets</span></div>
</div>
<div id="vscroll"><div id="vthumb"></div></div>
</div>
<div class="dot" style="left:1180px;top:934px"></div>
<div class="dot" style="left:1180px;top:944px"></div>
<div class="dot" style="left:1180px;top:954px"></div>

<div class="stt" style="left:10px">Issues:</div>
<svg class="abs" style="left:459px;top:1749px" width="26" height="26" viewBox="0 0 26 26"><circle cx="12.5" cy="12.5" r="12" fill="#e2786b"/><rect x="11" y="5" width="3" height="10" rx="1" fill="#fff"/><rect x="11" y="17" width="3" height="3" rx="1" fill="#fff"/></svg>
<div class="stt" style="left:496px">15 errors</div>
<svg class="abs" style="left:961px;top:1748px" width="30" height="28" viewBox="0 0 30 28"><path d="M14 1 L28 26 H0 Z" fill="#eab548"/><rect x="12.5" y="9" width="3" height="10" fill="#fff"/><rect x="12.5" y="21" width="3" height="3" fill="#fff"/></svg>
<div class="stt" style="left:999px">8524 warnings</div>


<svg class="abs" style="left:1196px;top:125px" width="16" height="24" viewBox="0 0 16 24"><path d="M13 1 L3 11.5 L13 22.5" fill="none" stroke="#202020" stroke-width="2"/></svg>
<div class="tabt" style="left:1218px">tandalone_badge_gravity_top_start.xml</div>
<svg class="abs" style="left:1614px;top:128px" width="17" height="16" viewBox="0 0 17 16"><path d="M0.5 0.5 L15.5 15.5 M15.5 0.5 L0.5 15.5" stroke="#b8b8b8" stroke-width="2"/></svg>
<span class="abs" style="left:1688px;top:122px"><svg width="32" height="32" viewBox="0 0 32 32"><path d="M14 0 A14 14 0 1 0 17.4 27.6 A8 8 0 0 1 27.6 17.4 A14 14 0 0 0 14 0 Z" fill="#9dcfe8"/><path d="M18.3 10.2 A5.3 5.3 0 1 0 18.3 17.8" fill="none" stroke="#3c3c3c" stroke-width="2"/><circle cx="24" cy="24" r="6.2" fill="#74b05a"/></svg></span>
<div class="tabt" style="left:1725px">FlagThreeActivity</div>
<svg class="abs" style="left:1923px;top:128px" width="17" height="16" viewBox="0 0 17 16"><path d="M0.5 0.5 L15.5 15.5 M15.5 0.5 L0.5 15.5" stroke="#b8b8b8" stroke-width="2"/></svg>
<svg class="abs" style="left:1998px;top:121px" width="31" height="32" viewBox="0 0 31 32"><path d="M4 8.6 L11.6 1 V8.6 Z" fill="#b4b9c0"/><path d="M14 1 H23.8 V14.8 H4 V11.1 H14 Z" fill="#b4b9c0"/><rect x="0" y="17.1" width="29.9" height="13.8" fill="#e58a78"/><path d="M9.9 19.3 L4.4 23.9 L9.9 28.7 M14.2 19.3 L19.7 23.9 L14.2 28.7" fill="none" stroke="#2f3a40" stroke-width="1.9"/></svg>
<div class="tabt" style="left:2036px">res/values/strings.xml</div>
<svg class="abs" style="left:2284px;top:128px" width="17" height="16" viewBox="0 0 17 16"><path d="M0.5 0.5 L15.5 15.5 M15.5 0.5 L0.5 15.5" stroke="#b8b8b8" stroke-width="2"/></svg>
<span class="abs" style="left:2358px;top:122px"><svg width="32" height="32" viewBox="0 0 32 32"><path d="M14 0 A14 14 0 1 0 17.4 27.6 A8 8 0 0 1 27.6 17.4 A14 14 0 0 0 14 0 Z" fill="#9dcfe8"/><path d="M18.3 10.2 A5.3 5.3 0 1 0 18.3 17.8" fill="none" stroke="#3c3c3c" stroke-width="2"/><circle cx="24" cy="24" r="6.2" fill="#74b05a"/></svg></span>
<div class="tabt" style="left:2395px">FlagFourActivity</div>
<svg class="abs" style="left:2584px;top:128px" width="17" height="16" viewBox="0 0 17 16"><path d="M0.5 0.5 L15.5 15.5 M15.5 0.5 L0.5 15.5" stroke="#b8b8b8" stroke-width="2"/></svg>
<div class="abs" style="left:2332px;top:164px;width:300px;height:6px;background:#4a7fc1"></div>
<span class="abs" style="left:2657px;top:122px"><svg width="32" height="32" viewBox="0 0 32 32"><path d="M14 0 A14 14 0 1 0 17.4 27.6 A8 8 0 0 1 27.6 17.4 A14 14 0 0 0 14 0 Z" fill="#9dcfe8"/><path d="M18.3 10.2 A5.3 5.3 0 1 0 18.3 17.8" fill="none" stroke="#3c3c3c" stroke-width="2"/><circle cx="24" cy="24" r="6.2" fill="#74b05a"/></svg></span>
<div class="tabt" style="left:2695px">C1461g</div>
<svg class="abs" style="left:2783px;top:128px" width="17" height="16" viewBox="0 0 17 16"><path d="M0.5 0.5 L15.5 15.5 M15.5 0.5 L0.5 15.5" stroke="#b8b8b8" stroke-width="2"/></svg>
<svg class="abs" style="left:2845px;top:129px" width="26" height="16" viewBox="0 0 26 16"><path d="M1 1.5 L12.5 13.5 L24 1.5" fill="none" stroke="#202020" stroke-width="2.2"/></svg>

<div id="tabline"></div>
<div id="editor"><div id="edin">

<div class="abs" style="left:1225px;top:1456px;width:1660px;height:20px;background:#fffab4"></div>
<div class="abs" style="left:1388px;top:1456px;width:60px;height:20px;background:#f6c34a"></div>
<div class="abs" style="left:1608px;top:1456px;width:60px;height:20px;background:#f6c34a"></div>
<div class="abs" style="left:1448px;top:1476px;width:60px;height:20px;background:#f6c34a"></div>
<div class="abs" style="left:1648px;top:1496px;width:60px;height:20px;background:#f6c34a"></div>
<div class="ln" style="top:177px">1</div>
<div class="ln" style="top:197px">2</div>
<div class="ln" style="top:217px">3</div>
<div class="ln" style="top:237px">4</div>
<div class="ln" style="top:257px">5</div>
<div class="ln" style="top:277px">6</div>
<div class="ln" style="top:297px">7</div>
<div class="ln" style="top:317px">8</div>
<div class="ln" style="top:337px">9</div>
<div class="ln" style="top:357px">10</div>
<div class="ln" style="top:377px">11</div>
<div class="ln" style="top:397px">12</div>
<div class="ln" style="top:417px">13</div>
<div class="ln" style="top:437px">14</div>
<div class="ln" style="top:457px">15</div>
<div class="ln" style="top:477px">16</div>
<div class="ln" style="top:497px">17</div>
<div class="ln" style="top:517px">18</div>
<div class="ln" style="top:537px">19</div>
<div class="ln" style="top:557px">20</div>
<div class="ln" style="top:577px">21</div>
<div class="ln" style="top:597px">22</div>
<div class="ln" style="top:617px">23</div>
<div class="ln" style="top:637px">24</div>
<div class="ln" style="top:657px">25</div>
<div class="ln" style="top:677px">26</div>
<div class="ln" style="top:697px">27</div>
<div class="ln" style="top:717px">28</div>
<div class="ln" style="top:737px">29</div>
<div class="ln" style="top:757px">30</div>
<div class="ln" style="top:777px">31</div>
<div class="ln" style="top:797px">32</div>
<div class="ln" style="top:817px">33</div>
<div class="ln" style="top:837px">34</div>
<div class="ln" style="top:857px">35</div>
<div class="ln" style="top:877px">36</div>
<div class="ln" style="top:897px">37</div>
<div class="ln" style="top:917px">38</div>
<div class="ln" style="top:937px">39</div>
<div class="ln" style="top:957px">40</div>
<div class="ln" style="top:977px">41</div>
<div class="ln" style="top:997px">42</div>
<div class="ln" style="top:1017px">43</div>
<div class="ln" style="top:1037px">44</div>
<div class="ln" style="top:1057px">45</div>
<div class="ln" style="top:1077px">46</div>
<div class="ln" style="top:1097px">47</div>
<div class="ln" style="top:1117px">48</div>
<div class="ln" style="top:1137px">49</div>
<div class="ln" style="top:1157px">50</div>
<div class="ln" style="top:1177px">51</div>
<div class="ln" style="top:1197px">52</div>
<div class="ln" style="top:1217px">53</div>
<div class="ln" style="top:1237px">54</div>
<div class="ln" style="top:1257px">55</div>
<div class="ln" style="top:1277px">56</div>
<div class="ln" style="top:1297px">57</div>
<div class="ln" style="top:1317px">58</div>
<div class="ln" style="top:1337px">59</div>
<div class="ln" style="top:1357px">60</div>
<div class="ln" style="top:1377px">61</div>
<div class="ln" style="top:1397px">62</div>
<div class="ln" style="top:1417px">63</div>
<div class="ln" style="top:1437px">64</div>
<div class="ln" style="top:1457px">65</div>
<div class="ln" style="top:1477px">66</div>
<div class="ln" style="top:1497px">67</div>
<div class="ln" style="top:1517px">68</div>
<div class="ln" style="top:1537px">69</div>
<div class="ln" style="top:1557px">70</div>
<div class="ln" style="top:1577px">71</div>
<div class="ln" style="top:1597px">72</div>
<div class="ln" style="top:1617px">73</div>
<div class="ln" style="top:1637px">74</div>
<div class="cl" style="top:177px"><b class="kw">package</b> b3nac.injuredandroid;</div>
<div class="cl" style="top:197px"></div>
<div class="cl" style="top:217px"><b class="kw">import</b> android.content.Intent;</div>
<div class="cl" style="top:237px"><b class="kw">import</b> android.os.Bundle;</div>
<div class="cl" style="top:257px"><b class="kw">import</b> android.view.View;</div>
<div class="cl" style="top:277px"><b class="kw">import</b> android.widget.EditText;</div>
<div class="cl" style="top:297px"><b class="kw">import</b> androidx.appcompat.app.ActivityC0459c;</div>
<div class="cl" style="top:317px"><b class="kw">import</b> com.google.android.material.floatingactionbutton.FloatingActionButton;</div>
<div class="cl" style="top:337px"><b class="kw">import</b> com.google.android.material.snackbar.Snackbar;</div>
<div class="cl" style="top:357px"><b class="kw">import</b> p135d.p141m.p143b.C2646d;</div>
<div class="cl" style="top:377px"><b class="kw">import</b> p135d.p146p.C2672c;</div>
<div class="cl" style="top:397px"></div>
<div class="cl" style="top:417px"><i class="cm">/* loaded from: classes.dex */</i></div>
<div class="cl" style="top:437px"><b class="kw">public</b> <b class="kw">final</b> <b class="kw">class</b> FlagFourActivity <b class="kw">extends</b> ActivityC0459c <span class="br">{</span></div>
<div class="cl" style="top:457px"></div>
<div class="cl" style="top:477px">    <i class="cm">/* renamed from: t */</i></div>
<div class="cl" style="top:497px">    <b class="kw">private</b> <b class="ty">int</b> f4391t;</div>
<div class="cl" style="top:517px"></div>
<div class="cl" style="top:537px">    <i class="cm">/* renamed from: b3nac.injuredandroid.FlagFourActivity$a */</i></div>
<div class="cl" style="top:557px">    <i class="cm">/* loaded from: classes.dex */</i></div>
<div class="cl" style="top:577px">    <b class="kw">static</b> <b class="kw">final</b> <b class="kw">class</b> View$OnClickListenerC1436a <b class="kw">implements</b> View.OnClickListener <span class="br">{</span></div>
<div class="cl" style="top:597px">        View$OnClickListenerC1436a<span class="br">(</span><span class="br">)</span> <span class="br">{</span></div>
<div class="cl" style="top:617px">        <span class="br">}</span></div>
<div class="cl" style="top:637px"></div>
<div class="cl" style="top:657px">        <span class="an">@Override</span> <i class="cm">// android.view.View.OnClickListener</i></div>
<div class="cl" style="top:677px">        <b class="kw">public</b> <b class="kw">final</b> <b class="kw">void</b> onClick<span class="br">(</span>View view<span class="br">)</span> <span class="br">{</span></div>
<div class="cl" style="top:697px">            <b class="kw">if</b> <span class="br">(</span>FlagFourActivity.<b class="kw">this</b>.m3921F<span class="br">(</span><span class="br">)</span> == <span class="nu">0</span><span class="br">)</span> <span class="br">{</span></div>
<div class="cl" style="top:717px">                Snackbar m2418X = Snackbar.m2418X<span class="br">(</span>view, <span class="st">&quot;Where is bob.&quot;</span>, <span class="nu">0</span><span class="br">)</span>;</div>
<div class="cl" style="top:737px">                m2418X.m2417Y<span class="br">(</span><span class="st">&quot;Action&quot;</span>, <b class="kw">null</b><span class="br">)</span>;</div>
<div class="cl" style="top:757px">                m2418X.mo2421N<span class="br">(</span><span class="br">)</span>;</div>
<div class="cl" style="top:777px">                FlagFourActivity flagFourActivity = FlagFourActivity.<b class="kw">this</b>;</div>
<div class="cl" style="top:797px">                flagFourActivity.m3920G<span class="br">(</span>flagFourActivity.m3921F<span class="br">(</span><span class="br">)</span> + <span class="nu">1</span><span class="br">)</span>;</div>
<div class="cl" style="top:817px">            <span class="br">}</span> <b class="kw">else</b> <b class="kw">if</b> <span class="br">(</span>FlagFourActivity.<b class="kw">this</b>.m3921F<span class="br">(</span><span class="br">)</span> == <span class="nu">1</span><span class="br">)</span> <span class="br">{</span></div>
<div class="cl" style="top:837px">                Snackbar m2418X2 = Snackbar.m2418X<span class="br">(</span>view, <span class="st">&quot;Classes and imports.&quot;</span>, <span class="nu">0</span><span class="br">)</span>;</div>
<div class="cl" style="top:857px">                m2418X2.m2417Y<span class="br">(</span><span class="st">&quot;Action&quot;</span>, <b class="kw">null</b><span class="br">)</span>;</div>
<div class="cl" style="top:877px">                m2418X2.mo2421N<span class="br">(</span><span class="br">)</span>;</div>
<div class="cl" style="top:897px">                FlagFourActivity.<b class="kw">this</b>.m3920G<span class="br">(</span><span class="nu">0</span><span class="br">)</span>;</div>
<div class="cl" style="top:917px">            <span class="br">}</span></div>
<div class="cl" style="top:937px">        <span class="br">}</span></div>
<div class="cl" style="top:957px">    <span class="br">}</span></div>
<div class="cl" style="top:977px"></div>
<div class="cl" style="top:997px">    <i class="cm">/* renamed from: F */</i></div>
<div class="cl" style="top:1017px">    <b class="kw">public</b> <b class="kw">final</b> <b class="ty">int</b> m3921F<span class="br">(</span><span class="br">)</span> <span class="br">{</span></div>
<div class="cl" style="top:1037px">        <b class="kw">return</b> <b class="kw">this</b>.f4391t;</div>
<div class="cl" style="top:1057px">    <span class="br">}</span></div>
<div class="cl" style="top:1077px"></div>
<div class="cl" style="top:1097px">    <i class="cm">/* renamed from: G */</i></div>
<div class="cl" style="top:1117px">    <b class="kw">public</b> <b class="kw">final</b> <b class="kw">void</b> m3920G<span class="br">(</span><b class="ty">int</b> i<span class="br">)</span> <span class="br">{</span></div>
<div class="cl" style="top:1137px">        <b class="kw">this</b>.f4391t = i;</div>
<div class="cl" style="top:1157px">    <span class="br">}</span></div>
<div class="cl" style="top:1177px"></div>
<div class="cl" style="top:1197px">    <i class="cm">/* JADX INFO: Access modifiers changed from: protected */</i></div>
<div class="cl" style="top:1217px">    <span class="an">@Override</span> <i class="cm">// androidx.appcompat.app.ActivityC0459c, androidx.fragment.app.ActivityC0774d, androidx.activity.ComponentActivity, androidx.core.app.ActivityC0720e, android.app.Activity</i></div>
<div class="cl" style="top:1237px">    <b class="kw">public</b> <b class="kw">void</b> onCreate<span class="br">(</span>Bundle bundle<span class="br">)</span> <span class="br">{</span></div>
<div class="cl" style="top:1257px">        <b class="kw">super</b>.onCreate<span class="br">(</span>bundle<span class="br">)</span>;</div>
<div class="cl" style="top:1277px">        setContentView<span class="br">(</span>R.layout.activity_flag_four<span class="br">)</span>;</div>
<div class="cl" style="top:1297px">        ApplicationC1464j.f4485g.m3867a<span class="br">(</span><b class="kw">this</b><span class="br">)</span>;</div>
<div class="cl" style="top:1317px">        <span class="br">(</span><span class="br">(</span>FloatingActionButton<span class="br">)</span> findViewById<span class="br">(</span>R.id.fab<span class="br">)</span><span class="br">)</span>.setOnClickListener<span class="br">(</span><b class="kw">new</b> View$OnClickListenerC1436a<span class="br">(</span><span class="br">)</span><span class="br">)</span>;</div>
<div class="cl" style="top:1337px">    <span class="br">}</span></div>
<div class="cl" style="top:1357px"></div>
<div class="cl" style="top:1377px">    <b class="kw">public</b> <b class="kw">final</b> <b class="kw">void</b> submitFlag<span class="br">(</span>View view<span class="br">)</span> <span class="br">{</span></div>
<div class="cl" style="top:1397px">        EditText editText = <span class="br">(</span>EditText<span class="br">)</span> findViewById<span class="br">(</span>R.id.editText2<span class="br">)</span>;</div>
<div class="cl" style="top:1417px">        C2646d.m696b<span class="br">(</span>editText, <span class="st">&quot;editText2&quot;</span><span class="br">)</span>;</div>
<div class="cl" style="top:1437px">        <span class="sy">String</span> obj = editText.getText<span class="br">(</span><span class="br">)</span>.toString<span class="br">(</span><span class="br">)</span>;</div>
<div class="cl" style="top:1457px">        <b class="ty">byte</b><span class="br">[</span><span class="br">]</span> m3875a = <b class="kw">new</b> C1461g<span class="br">(</span><span class="br">)</span>.m3875a<span class="br">(</span><span class="br">)</span>;</div>
<div class="cl" style="top:1477px">        C2646d.m696b<span class="br">(</span>m3875a, <span class="st">&quot;decoder.getData()&quot;</span><span class="br">)</span>;</div>
<div class="cl" style="top:1497px">        <b class="kw">if</b> <span class="br">(</span>C2646d.m697a<span class="br">(</span>obj, <b class="kw">new</b> <span class="sy">String</span><span class="br">(</span>m3875a, C2672c.f6838a<span class="br">)</span><span class="br">)</span><span class="br">)</span> <span class="br">{</span></div>
<div class="cl" style="top:1517px">            Intent intent = <b class="kw">new</b> Intent<span class="br">(</span><b class="kw">this</b>, FlagOneSuccess.<b class="kw">class</b><span class="br">)</span>;</div>
<div class="cl" style="top:1537px">            <b class="kw">new</b> FlagsOverview<span class="br">(</span><span class="br">)</span>.m3891I<span class="br">(</span><b class="kw">true</b><span class="br">)</span>;</div>
<div class="cl" style="top:1557px">            <b class="kw">new</b> ApplicationC1464j<span class="br">(</span><span class="br">)</span>.m3870b<span class="br">(</span><b class="kw">this</b>, <span class="st">&quot;flagFourButtonColor&quot;</span>, <b class="kw">true</b><span class="br">)</span>;</div>
<div class="cl" style="top:1577px">            startActivity<span class="br">(</span>intent<span class="br">)</span>;</div>
<div class="cl" style="top:1597px">        <span class="br">}</span></div>
<div class="cl" style="top:1617px">    <span class="br">}</span></div>
<div class="cl" style="top:1637px"><span class="br">}</span></div>
<div class="abs" style="left:1657px;top:1457px;width:2px;height:18px;background:#e02020"></div>

</div></div>

<div id="gutline"></div>
<div id="hscroll"><div id="hthumb"></div></div>
<div class="abs" style="left:1298px;top:1724px;width:1582px;height:2px;background:#c4c4c4"></div>
<div class="abs" style="left:1188px;top:1724px;width:110px;height:6px;background:#4a7fc1"></div>
<div class="btt" style="left:1211px">Code</div>
<div class="btt" style="left:1320px">Smali</div>
<div class="btt" style="left:1433.5px">Simple</div>
<div class="btt" style="left:1562px">Fallback</div>
<div class="abs" style="left:1790px;top:1742px;width:28px;height:28px;border:2px solid #ababab;border-radius:6px;background:#fff"></div>
<div class="btt" style="left:1826px;top:1739px">Split view</div>
<div class="dot" style="left:1428px;top:1792px"></div>
<div class="dot" style="left:1438px;top:1792px"></div>
<div class="dot" style="left:1448px;top:1792px"></div>


<div class="abs" style="left:1260px;top:1365px;width:798px;height:282px;border:5px solid #1a5acc"></div>
<svg class="abs" style="left:0;top:0" width="2880" height="1800" viewBox="0 0 2880 1800" style="pointer-events:none">
<path d="M1826 1471 L1742 1494" stroke="#1a5acc" stroke-width="5" stroke-linecap="butt"/>
<path d="M1724 1494.5 L1746 1477 L1750.5 1500.5 Z" fill="#1a5acc"/>
<g fill="rgb(180,220,180)" fill-opacity="0.61" font-family="Liberation Sans" font-weight="bold" font-size="292">
<text x="1007" y="842">X</text>
<text transform="translate(1199.3,842) scale(0.94,1.01)">S</text>
<text transform="translate(1387.3,842) scale(0.94,1.01)">S</text>
<rect x="1592" y="804" width="38" height="38"/>
<rect x="1669" y="641" width="40" height="35"/>
<rect x="1669" y="697" width="40" height="145"/>
<text transform="translate(1725.9,843.5) scale(0.985,0.975)">s</text>
</g>
</svg>

</body></html>
